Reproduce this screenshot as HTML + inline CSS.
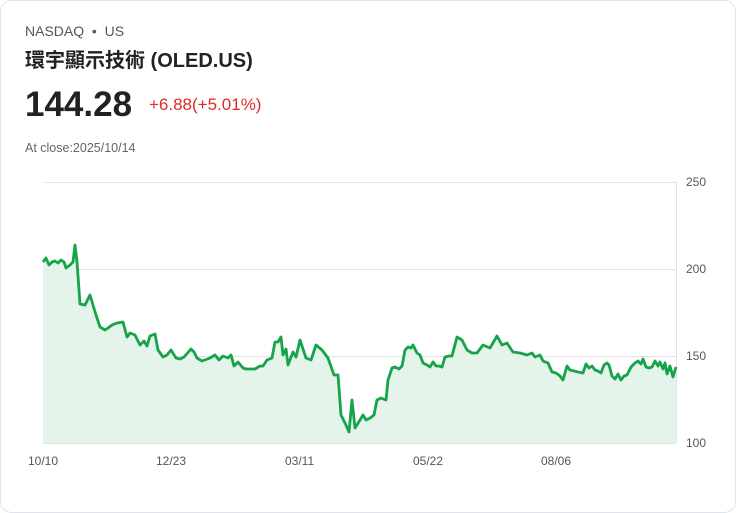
<!DOCTYPE html>
<html><head><meta charset="utf-8"><style>
body{margin:0;background:#fff;width:736px;height:513px;overflow:hidden;font-family:"Liberation Sans","Noto Sans CJK TC",sans-serif}
.card{position:absolute;left:0;top:0;width:734px;height:511px;border:1px solid #dfe3ea;border-radius:12px;background:#fff}
.t{position:absolute;white-space:nowrap}
</style></head><body>
<div class="card"></div>
<div class="t" style="left:25px;top:23px;font-size:14px;color:#555">NASDAQ &nbsp;•&nbsp; US</div>
<div class="t" style="left:25px;top:44px;font-size:20px;font-weight:bold;color:#222">環宇顯示技術 (OLED.US)</div>
<div class="t" style="left:25px;top:85px;font-size:35px;font-weight:bold;color:#222">144.28</div>
<div class="t" style="left:149px;top:95px;font-size:17px;color:#e02a2a">+6.88(+5.01%)</div>
<div class="t" style="left:25px;top:141px;font-size:12.5px;color:#666">At close:2025/10/14</div>
<svg width="736" height="513" style="position:absolute;left:0;top:0">
<g stroke="#e3e3e3" stroke-width="1">
<line x1="43" y1="182.5" x2="676" y2="182.5"/><line x1="43" y1="269.5" x2="676" y2="269.5"/>
<line x1="43" y1="356.5" x2="676" y2="356.5"/><line x1="43" y1="443.5" x2="676" y2="443.5"/>
<line x1="676.5" y1="182" x2="676.5" y2="443"/></g>
<polygon fill="#e5f4ea" points="43,443 43,262 46,258 49,265 52,262 55,261 58,263 61,260 64,262 66,268 70,265 73,262 75,245 77,262 80,304 85,305 90,295 93,305 96,315 100,327 105,330 108,328 112,325 117,323 123,322 127,337 130,333 135,335 140,345 144,341 147,346 150,336 155,334 158,350 163,357 167,355 171,350 176,358 180,359 184,357 191,349 194,352 197,358 202,361 210,358 215,355 219,360 223,356 228,358 231,355 234,366 238,362 243,368 246,369 255,369 260,366 263,366 267,360 272,358 275,342 278,342 281,337 283,355 286,349 288,365 293,352 296,357 300,340 306,358 311,360 316,345 322,350 325,354 328,358 334,375 338,375 341,415 346,425 349,432 352,400 355,428 360,420 363,415 366,420 370,418 374,415 377,400 381,398 386,400 388,380 392,368 395,367 399,369 402,366 405,350 408,347 411,348 413,345 417,353 420,355 423,363 427,365 430,367 433,362 436,366 439,366 442,367 445,357 449,356 452,356 457,337 462,340 467,350 472,353 477,353 483,345 490,348 497,336 502,345 507,343 513,352 520,353 527,355 532,353 535,357 540,355 543,361 548,363 552,372 556,373 560,376 563,380 567,366 570,370 574,371 578,372 583,373 586,364 589,368 592,366 595,370 598,371 601,373 604,365 607,363 609,365 612,376 615,379 618,374 621,380 624,376 627,375 631,367 635,363 638,361 641,364 643,359 646,367 649,368 652,367 655,361 658,366 660,362 663,369 665,363 667,374 670,366 673,377 676,367 676,443"/>
<polyline fill="none" stroke="#16a34a" stroke-width="2.8" stroke-linejoin="round" points="43,262 46,258 49,265 52,262 55,261 58,263 61,260 64,262 66,268 70,265 73,262 75,245 77,262 80,304 85,305 90,295 93,305 96,315 100,327 105,330 108,328 112,325 117,323 123,322 127,337 130,333 135,335 140,345 144,341 147,346 150,336 155,334 158,350 163,357 167,355 171,350 176,358 180,359 184,357 191,349 194,352 197,358 202,361 210,358 215,355 219,360 223,356 228,358 231,355 234,366 238,362 243,368 246,369 255,369 260,366 263,366 267,360 272,358 275,342 278,342 281,337 283,355 286,349 288,365 293,352 296,357 300,340 306,358 311,360 316,345 322,350 325,354 328,358 334,375 338,375 341,415 346,425 349,432 352,400 355,428 360,420 363,415 366,420 370,418 374,415 377,400 381,398 386,400 388,380 392,368 395,367 399,369 402,366 405,350 408,347 411,348 413,345 417,353 420,355 423,363 427,365 430,367 433,362 436,366 439,366 442,367 445,357 449,356 452,356 457,337 462,340 467,350 472,353 477,353 483,345 490,348 497,336 502,345 507,343 513,352 520,353 527,355 532,353 535,357 540,355 543,361 548,363 552,372 556,373 560,376 563,380 567,366 570,370 574,371 578,372 583,373 586,364 589,368 592,366 595,370 598,371 601,373 604,365 607,363 609,365 612,376 615,379 618,374 621,380 624,376 627,375 631,367 635,363 638,361 641,364 643,359 646,367 649,368 652,367 655,361 658,366 660,362 663,369 665,363 667,374 670,366 673,377 676,367"/>
<g font-family="Liberation Sans, sans-serif" font-size="12" fill="#555">
<text x="686" y="186">250</text><text x="686" y="273">200</text><text x="686" y="360">150</text><text x="686" y="447">100</text>
<text x="28" y="465">10/10</text><text x="156" y="465">12/23</text><text x="285" y="465">03/11</text><text x="413" y="465">05/22</text><text x="541" y="465">08/06</text>
</g></svg>
</body></html>
